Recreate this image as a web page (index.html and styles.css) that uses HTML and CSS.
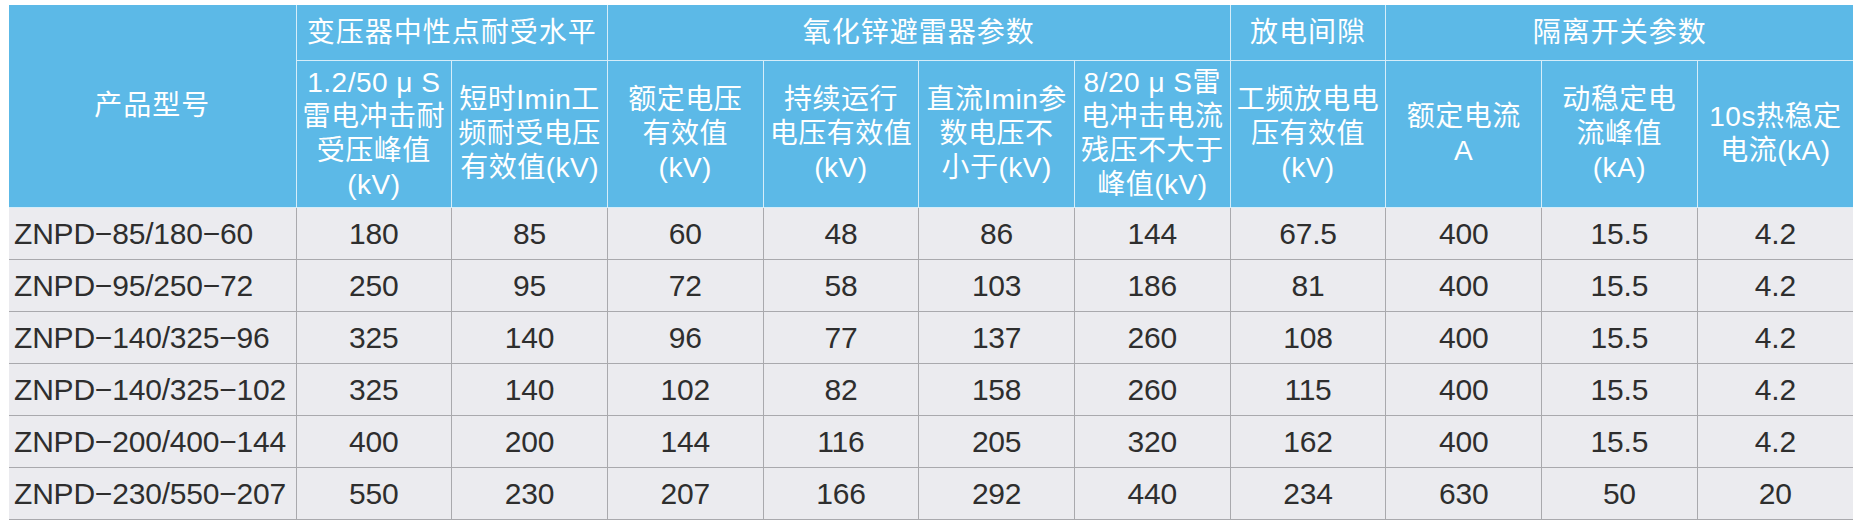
FILE: index.html
```html
<!DOCTYPE html>
<html lang="zh-CN">
<head>
<meta charset="utf-8">
<title>ZNPD 参数表</title>
<link rel="stylesheet" href="styles.css">
</head>
<body>
<table class="spec">
  <colgroup>
    <col class="c-model">
    <col class="c-val"><col class="c-val"><col class="c-val"><col class="c-val"><col class="c-val">
    <col class="c-val"><col class="c-val"><col class="c-val"><col class="c-val"><col class="c-val">
  </colgroup>
  <thead>
    <tr class="h1">
      <th rowspan="2" class="model-head">产品型号</th>
      <th colspan="2">变压器中性点耐受水平</th>
      <th colspan="4">氧化锌避雷器参数</th>
      <th>放电间隙</th>
      <th colspan="3">隔离开关参数</th>
    </tr>
    <tr class="h2">
      <th>1.2/50 μ S<br>雷电冲击耐<br>受压峰值<br>(kV)</th>
      <th>短时Imin工<br>频耐受电压<br>有效值(kV)</th>
      <th>额定电压<br>有效值<br>(kV)</th>
      <th>持续运行<br>电压有效值<br>(kV)</th>
      <th>直流Imin参<br>数电压不<br>小于(kV)</th>
      <th>8/20 μ S雷<br>电冲击电流<br>残压不大于<br>峰值(kV)</th>
      <th>工频放电电<br>压有效值<br>(kV)</th>
      <th>额定电流<br>A</th>
      <th>动稳定电<br>流峰值<br>(kA)</th>
      <th>10s热稳定<br>电流(kA)</th>
    </tr>
  </thead>
  <tbody>
    <tr><td class="model">ZNPD−85/180−60</td><td>180</td><td>85</td><td>60</td><td>48</td><td>86</td><td>144</td><td>67.5</td><td>400</td><td>15.5</td><td>4.2</td></tr>
    <tr><td class="model">ZNPD−95/250−72</td><td>250</td><td>95</td><td>72</td><td>58</td><td>103</td><td>186</td><td>81</td><td>400</td><td>15.5</td><td>4.2</td></tr>
    <tr><td class="model">ZNPD−140/325−96</td><td>325</td><td>140</td><td>96</td><td>77</td><td>137</td><td>260</td><td>108</td><td>400</td><td>15.5</td><td>4.2</td></tr>
    <tr><td class="model">ZNPD−140/325−102</td><td>325</td><td>140</td><td>102</td><td>82</td><td>158</td><td>260</td><td>115</td><td>400</td><td>15.5</td><td>4.2</td></tr>
    <tr><td class="model">ZNPD−200/400−144</td><td>400</td><td>200</td><td>144</td><td>116</td><td>205</td><td>320</td><td>162</td><td>400</td><td>15.5</td><td>4.2</td></tr>
    <tr><td class="model">ZNPD−230/550−207</td><td>550</td><td>230</td><td>207</td><td>166</td><td>292</td><td>440</td><td>234</td><td>630</td><td>50</td><td>20</td></tr>
  </tbody>
</table>
</body>
</html>
```

FILE: styles.css
```css
html, body {
  margin: 0;
  padding: 0;
  background: #ffffff;
}
body {
  padding: 5px 0 0 9px;
  font-family: "Liberation Sans", "Noto Sans CJK SC", sans-serif;
}
.spec {
  table-layout: fixed;
  border-collapse: collapse;
  width: 1844px;
}
.c-model { width: 287px; }
.c-val { width: 155.7px; }

.spec th {
  background: #5cb9e7;
  color: #ffffff;
  font-weight: normal;
  font-size: 28px;
  line-height: 34px;
  text-align: center;
  vertical-align: middle;
  border: 1px solid #d6edf9;
  padding: 0;
  letter-spacing: 0.5px;
}
.spec thead tr:first-child th { border-top: none; }
.spec thead th:first-child { border-left: none; }
.spec thead tr th:last-child { border-right: none; }
.spec .h1 th { height: 55px; letter-spacing: 1px; }
.spec .h2 th { height: 146px; }
.spec .h1 th.model-head { border-right: 1px solid #d6edf9; }

.spec td {
  background: #ebebef;
  color: #2e2e2e;
  font-size: 30px;
  letter-spacing: -0.2px;
  height: 51px;
  padding: 0;
  text-align: center;
  vertical-align: middle;
  border: 1px solid #a9a9ad;
}
.spec td:first-child { border-left: none; }
.spec td:last-child { border-right: none; }
.spec td.model {
  text-align: left;
  padding-left: 5px;
}
```
